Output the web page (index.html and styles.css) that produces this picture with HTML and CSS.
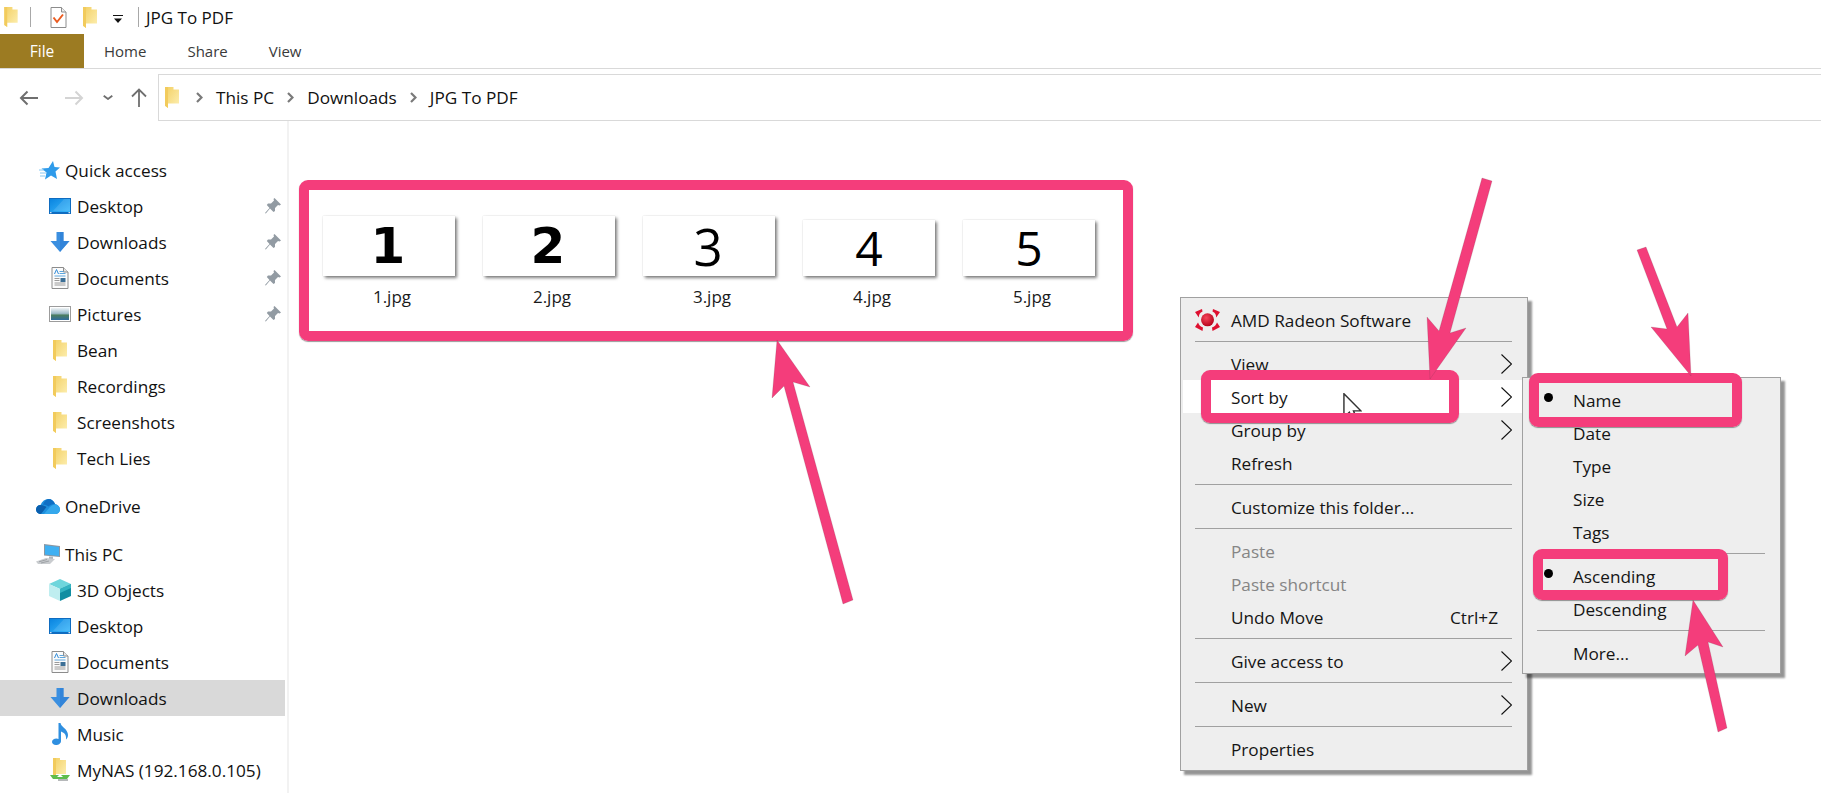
FILE: index.html
```html
<!DOCTYPE html>
<html lang="en">
<head>
<meta charset="utf-8">
<title>JPG To PDF</title>
<link rel="stylesheet" href="styles.css">
</head>
<body>
<svg class="sprite" width="0" height="0" aria-hidden="true">
  <defs>
    <linearGradient id="fold" x1="0" y1="0" x2="1" y2="1"><stop offset="0" stop-color="#f3cf62"/><stop offset="1" stop-color="#fdf0b4"/></linearGradient>
    <linearGradient id="blue" x1="0" y1="0" x2="1" y2="1"><stop offset="0" stop-color="#0a84e0"/><stop offset="1" stop-color="#39b7fb"/></linearGradient>
    <linearGradient id="pic" x1="0" y1="0" x2="0" y2="1"><stop offset="0" stop-color="#f0f4f6"/><stop offset=".45" stop-color="#9fbcc9"/><stop offset=".6" stop-color="#4b7d5e"/><stop offset="1" stop-color="#2f6c9e"/></linearGradient>
    <radialGradient id="ball" cx=".4" cy=".35" r=".7"><stop offset="0" stop-color="#f6455b"/><stop offset="1" stop-color="#b30018"/></radialGradient>
    <symbol id="i-folder" viewBox="0 0 14 21"><path d="M0 0H8.500V2.500H14V16.500H3V21L0 18.800Z" fill="url(#fold)"/><path d="M0 0H3V21L0 18.800Z" fill="#f2cb5c"/></symbol>
    <symbol id="i-desktop" viewBox="0 0 22 16"><rect width="22" height="16" fill="#0f6cc0"/><rect x="1" y="1" width="20" height="13" fill="url(#blue)"/><path d="M4 13L15 1H21V13Z" fill="#fff" opacity=".12"/><rect x="1" y="14.200" width="1.500" height="1" fill="#fff"/><rect x="19.500" y="14.200" width="1.500" height="1" fill="#fff"/></symbol>
    <symbol id="i-down" viewBox="0 0 19 20"><path d="M6 0H13V9H19L9.500 20L0 9H6Z" fill="#3b8fe0"/><path d="M9.500 0H13V9H19L9.500 20Z" fill="#2f7fd6" opacity=".7"/></symbol>
    <symbol id="i-doc" viewBox="0 0 17 22"><path d="M.5.500H12L16.500 5V21.500H.5Z" fill="#fbfbfb" stroke="#8c8c8c"/><path d="M12 .5V5H16.500" fill="#e6e6e6" stroke="#8c8c8c"/><path d="M3 7L5 2.500L7 7" fill="none" stroke="#2e8ad8"/><path d="M8 4.500H12M8 6.500H14M3 9H14" stroke="#5ea6dd"/><path d="M3 11.500H8M3 13.500H8M3 16H14M3 18H14" stroke="#9a9a9a"/><rect x="9" y="11" width="5" height="4" fill="#3c6f96"/></symbol>
    <symbol id="i-pic" viewBox="0 0 22 16"><rect x=".5" y=".5" width="21" height="15" fill="#fff" stroke="#9c9c9c"/><rect x="2" y="2" width="18" height="12" fill="url(#pic)"/></symbol>
    <symbol id="i-star" viewBox="0 0 24 19"><polygon points="17,0 18.500,6 24,6.500 19.500,10.500 21,18 15,14.500 9,18.500 10.500,11.500 5.500,7.500 12.500,7" fill="#2f9bea"/><path d="M3 9H8M4 12H10M4 15H9" stroke="#86c8f3"/></symbol>
    <symbol id="i-cloud" viewBox="0 0 24 16"><path d="M5 16C1.500 16 0 13.500 0 11.500C0 9 2 7 4.500 7C6 3 9 1 12.500 1C15.500 1 18 3 19 6C22 6.500 24 9 24 11.500C24 14 22 16 19 16Z" fill="#1d8fdd"/><path d="M5 16C2 16 0 14 0 11.500C0 9 2 7 4.500 7C7 7 9 8 10.500 9L5 16Z" fill="#0a5fae"/><path d="M12.500 1C15.500 1 18 3 19 6C16 6 14 7 12.500 8.500C10.500 7 8.500 6.500 7 6.800C8 3.500 10 1 12.500 1Z" fill="#0f6fc4"/><path d="M8 16L14 9C16 7 19 6 21 7C23 8 24 10 24 11.500C24 14 22 16 19 16Z" fill="#35a8ec"/></symbol>
    <symbol id="i-pc" viewBox="0 0 24 20"><path d="M8 0L24 2V13L8 11.500Z" fill="#8a97a3"/><path d="M9 1.300L23 3V12L9 10.500Z" fill="#3fb0f2"/><path d="M13 12.500H17V15H13Z" fill="#aeb6bc"/><path d="M0 17.500L10 14L19 15L14 20H2Z" fill="#c9cccf"/><path d="M3 17.800L11 15.500M5 19L13 17" stroke="#9ea2a6"/></symbol>
    <symbol id="i-cube" viewBox="0 0 22 22"><path d="M11 0L22 5L11 10L0 5Z" fill="#6fd6dc"/><path d="M0 5L11 10V22L0 17Z" fill="#bfeef0"/><path d="M22 5L11 10V22L22 17Z" fill="#118ea2"/><path d="M11 14L22 9V5L11 10Z" fill="#35b4c2"/></symbol>
    <symbol id="i-music" viewBox="0 0 17 22"><path d="M7 0H9C9.500 4 16.500 6 16.500 12C16.500 14 15.500 15.500 14.500 16.500C15 11 12 9.500 9.500 8.500V18C9.500 20.500 7 22 4.500 22C2 22 .5 20.500 .5 19C.5 17 2.500 15.500 5 15.500C5.500 15.500 6.500 15.700 7 16Z" fill="#2f8fe0"/></symbol>
    <symbol id="i-nas" viewBox="0 0 20 24"><path d="M3 0H10V2H16V16H6V19L3 17Z" fill="url(#fold)"/><path d="M3 0H6V19L3 17Z" fill="#f2cb5c"/><path d="M0 17H20L17 21H3Z" fill="#5fbd4d"/><path d="M7 19H13L10 16Z" fill="#fff"/><rect x="8" y="21" width="10" height="2" fill="#b6b8ba"/></symbol>
    <symbol id="i-pin" viewBox="0 0 16 16"><path d="M9.500 0L16 6.500L14.500 7.500L13 7L10 10L10 13L8.500 14L5 10.500L.8 15.500L0 15L4.500 10L1.800 7L3 5.500H6L9 2.500L8.500 1Z" fill="#929ba3"/></symbol>
    <symbol id="i-amd" viewBox="0 0 25 22"><path d="M0 3L7 0L7.500 2.500C5 3.500 3.800 5.500 3.800 8.500ZM25 3L18 0L17.500 2.500C20 3.500 21.200 5.500 21.200 8.500ZM0 18L3 13.500C4 16 5.500 18 8 18.500L7.500 22ZM25 18L22 13.500C21 16 19.500 18 17 18.500L17.500 22Z" fill="#de1030"/><circle cx="12.500" cy="10.800" r="6.500" fill="url(#ball)"/></symbol>
    <symbol id="i-chev" viewBox="0 0 11 20"><path d="M.5.500L10.500 10L.5 19.500" fill="none" stroke="#111" stroke-width="1.100"/></symbol>
    <symbol id="i-crumb" viewBox="0 0 7 11"><path d="M1 1L5.500 5.500L1 10" fill="none" stroke="#7a7a7a" stroke-width="2.200"/></symbol>
  </defs>
</svg>

<header class="titlebar">
  <svg class="qa-folder"><use href="#i-folder"/></svg>
  <span class="qa-sep"></span>
  <svg class="qa-doc" viewBox="0 0 16 21"><path d="M.5.500H11L15.500 5V20.500H.5Z" fill="#fff" stroke="#8c8c8c"/><path d="M11 .5V5H15.500" fill="#eee" stroke="#8c8c8c"/><path d="M3 10.500L6.500 15L12.500 7.500" fill="none" stroke="#ea5b20" stroke-width="2"/></svg>
  <svg class="qa-folder2"><use href="#i-folder"/></svg>
  <svg class="qa-drop" viewBox="0 0 10 8"><path d="M0 .5H10" stroke="#111"/><path d="M1 3.500H9L5 8Z" fill="#111"/></svg>
  <span class="qa-sep qa-sep2"></span>
  <span class="title-text">JPG To PDF</span>
</header>

<nav class="tabs">
  <span class="tab-file">File</span>
  <span class="tab">Home</span>
  <span class="tab">Share</span>
  <span class="tab">View</span>
</nav>

<div class="navbar">
  <svg class="nav-back" viewBox="0 0 19 16"><path d="M19 8H2M8.500 1.500L2 8L8.500 14.500" fill="none" stroke="#6f6f6f" stroke-width="2"/></svg>
  <svg class="nav-fwd" viewBox="0 0 19 16"><path d="M0 8H17M10.500 1.500L17 8L10.500 14.500" fill="none" stroke="#d4d4d4" stroke-width="2"/></svg>
  <svg class="nav-down" viewBox="0 0 10 5"><path d="M.7.700L5 4L9.300.700" fill="none" stroke="#6f6f6f" stroke-width="1.800"/></svg>
  <svg class="nav-up" viewBox="0 0 16 19"><path d="M8 19V2M1 8.500L8 1.500L15 8.500" fill="none" stroke="#6f6f6f" stroke-width="1.800"/></svg>
  <div class="address">
    <svg class="addr-folder"><use href="#i-folder"/></svg>
    <svg class="crumb crumb-first"><use href="#i-crumb"/></svg>
    <span>This PC</span>
    <svg class="crumb"><use href="#i-crumb"/></svg>
    <span>Downloads</span>
    <svg class="crumb"><use href="#i-crumb"/></svg>
    <span>JPG To PDF</span>
  </div>
</div>

<main class="main">
  <aside class="sidebar">
    <div class="group">
      <div class="row top"><svg class="ic-top ic-star"><use href="#i-star"/></svg><span>Quick access</span></div>
      <div class="row"><svg class="ic ic-desk"><use href="#i-desktop"/></svg><span>Desktop</span><svg class="pin"><use href="#i-pin"/></svg></div>
      <div class="row"><svg class="ic ic-down"><use href="#i-down"/></svg><span>Downloads</span><svg class="pin"><use href="#i-pin"/></svg></div>
      <div class="row"><svg class="ic ic-doc"><use href="#i-doc"/></svg><span>Documents</span><svg class="pin"><use href="#i-pin"/></svg></div>
      <div class="row"><svg class="ic ic-pic"><use href="#i-pic"/></svg><span>Pictures</span><svg class="pin"><use href="#i-pin"/></svg></div>
      <div class="row"><svg class="ic ic-fold"><use href="#i-folder"/></svg><span>Bean</span></div>
      <div class="row"><svg class="ic ic-fold"><use href="#i-folder"/></svg><span>Recordings</span></div>
      <div class="row"><svg class="ic ic-fold"><use href="#i-folder"/></svg><span>Screenshots</span></div>
      <div class="row"><svg class="ic ic-fold"><use href="#i-folder"/></svg><span>Tech Lies</span></div>
    </div>
    <div class="group">
      <div class="row top"><svg class="ic-top ic-cloud"><use href="#i-cloud"/></svg><span>OneDrive</span></div>
    </div>
    <div class="group">
      <div class="row top"><svg class="ic-top ic-pc"><use href="#i-pc"/></svg><span>This PC</span></div>
      <div class="row"><svg class="ic ic-cube"><use href="#i-cube"/></svg><span>3D Objects</span></div>
      <div class="row"><svg class="ic ic-desk"><use href="#i-desktop"/></svg><span>Desktop</span></div>
      <div class="row"><svg class="ic ic-doc"><use href="#i-doc"/></svg><span>Documents</span></div>
      <div class="row selected"><svg class="ic ic-down"><use href="#i-down"/></svg><span>Downloads</span></div>
      <div class="row"><svg class="ic ic-music"><use href="#i-music"/></svg><span>Music</span></div>
      <div class="row"><svg class="ic ic-nas"><use href="#i-nas"/></svg><span>MyNAS (192.168.0.105)</span></div>
    </div>
  </aside>

  <section class="files">
    <figure class="file"><div class="thumb"><span class="digit bold">1</span></div><figcaption>1.jpg</figcaption></figure>
    <figure class="file"><div class="thumb"><span class="digit bold">2</span></div><figcaption>2.jpg</figcaption></figure>
    <figure class="file"><div class="thumb"><span class="digit big">3</span></div><figcaption>3.jpg</figcaption></figure>
    <figure class="file"><div class="thumb short"><span class="digit">4</span></div><figcaption>4.jpg</figcaption></figure>
    <figure class="file"><div class="thumb short"><span class="digit">5</span></div><figcaption>5.jpg</figcaption></figure>
  </section>
</main>

<div class="menu menu-main">
  <div class="item item-amd"><svg class="amd"><use href="#i-amd"/></svg><span>AMD Radeon Software</span></div>
  <div class="sep"></div>
  <div class="item"><span>View</span><svg class="chev"><use href="#i-chev"/></svg></div>
  <div class="item hover"><span>Sort by</span><svg class="chev"><use href="#i-chev"/></svg></div>
  <div class="item"><span>Group by</span><svg class="chev"><use href="#i-chev"/></svg></div>
  <div class="item"><span>Refresh</span></div>
  <div class="sep"></div>
  <div class="item"><span>Customize this folder...</span></div>
  <div class="sep"></div>
  <div class="item disabled"><span>Paste</span></div>
  <div class="item disabled"><span>Paste shortcut</span></div>
  <div class="item"><span>Undo Move</span><span class="shortcut">Ctrl+Z</span></div>
  <div class="sep"></div>
  <div class="item"><span>Give access to</span><svg class="chev"><use href="#i-chev"/></svg></div>
  <div class="sep"></div>
  <div class="item"><span>New</span><svg class="chev"><use href="#i-chev"/></svg></div>
  <div class="sep"></div>
  <div class="item"><span>Properties</span></div>
</div>

<div class="menu menu-sub">
  <div class="item dotted"><i class="dot"></i><span>Name</span></div>
  <div class="item"><span>Date</span></div>
  <div class="item"><span>Type</span></div>
  <div class="item"><span>Size</span></div>
  <div class="item"><span>Tags</span></div>
  <div class="sep"></div>
  <div class="item dotted"><i class="dot"></i><span>Ascending</span></div>
  <div class="item"><span>Descending</span></div>
  <div class="sep"></div>
  <div class="item"><span>More...</span></div>
</div>

<svg class="cursor" viewBox="0 0 13 21"><path d="M.5.500V17L4.300 13.500L7 20L9.800 18.800L7.200 12.500H12.300Z" fill="#fff" stroke="#333"/></svg>

<div class="callout callout-files"></div>
<div class="callout callout-sort"></div>
<div class="callout callout-name"></div>
<div class="callout callout-asc"></div>

<svg class="arrows" viewBox="0 0 1821 793">
  <polygon points="777,340 810,387 793,382 853,600 843,604 784,386 772,398"/>
  <polygon points="1482,178 1492,181 1450,333 1466,328 1430,379 1427,317 1439,331"/>
  <polygon points="1637,250 1646,247 1677,327 1688,313 1691,376 1651,327 1667,329"/>
  <polygon points="1693,600 1723,647 1708,642 1727,728 1718,732 1698,645 1685,656"/>
</svg>
</body>
</html>
```

FILE: styles.css
```css
* { box-sizing: border-box; }
html, body { margin: 0; height: 793px; overflow: hidden; background: #fff; }
body {
  position: relative;
  display: flex;
  flex-direction: column;
  font-family: "Open Sans", "Noto Sans", sans-serif;
  font-size: 17.200px;
  color: #111;
}
svg { display: block; flex: none; }
.sprite { position: absolute; }

/* title bar */
.titlebar { height: 34px; display: flex; align-items: center; }
.qa-folder { width: 14px; height: 20px; margin-left: 4px; }
.qa-sep { width: 1px; height: 20px; background: #a8a8a8; margin-left: 12px; }
.qa-doc { width: 17px; height: 21px; margin-left: 19px; }
.qa-folder2 { width: 14px; height: 21px; margin-left: 16px; }
.qa-drop { width: 10px; height: 8px; margin-left: 16px; margin-top: 4px; }
.qa-sep2 { margin-left: 15px; }
.title-text { margin-left: 7px; font-size: 17px; }

/* ribbon tabs */
.tabs { height: 35px; display: flex; border-bottom: 1px solid #d9d9d9; gap: 41px; align-items: stretch; }
.tab-file { width: 84px; background: #9c7b22; color: #fff; display: flex; align-items: center; justify-content: center; margin-right: -21px; font-size: 15.500px; }
.tab { display: flex; align-items: center; color: #3a3a3a; font-size: 15px; }

/* navigation */
.navbar { height: 52px; padding-top: 5px; display: flex; align-items: center; }
.nav-back { width: 19px; height: 16px; margin-left: 19px; }
.nav-fwd { width: 19px; height: 16px; margin-left: 27px; }
.nav-down { width: 10px; height: 5px; margin-left: 19px; }
.nav-up { width: 16px; height: 19px; margin-left: 18px; }
.address { flex: 1; height: 47px; margin-left: 11px; border: 1px solid #d9d9d9; border-right: 0; display: flex; align-items: center; }
.addr-folder { width: 14px; height: 21px; margin-left: 6px; }
.crumb { width: 7px; height: 11px; margin: 0 13px 0 13px; }
.crumb-first { margin-left: 17px; }

/* main */
.main { flex: 1; display: flex; min-height: 0; }
.sidebar { width: 289px; padding: 31px 2px 0 0; border-right: 2px solid #f2f2f2; }
.group { margin-bottom: 12px; }
.row { height: 36px; display: flex; align-items: center; padding-left: 49px; }
.row.top { padding-left: 36px; }
.row.selected { background: #d9d9d9; }
.ic-top { width: 24px; margin-right: 5px; }
.ic-star { height: 19px; }
.ic-cloud { height: 16px; }
.ic-pc { height: 20px; }
.ic { width: 22px; margin-right: 6px; }
.ic-desk { height: 16px; }
.ic-down { height: 20px; }
.ic-doc { height: 22px; }
.ic-pic { height: 16px; }
.ic-fold { height: 21px; }
.ic-cube { height: 22px; }
.ic-music { height: 22px; }
.ic-nas { height: 24px; }
.pin { width: 16px; height: 16px; margin-left: auto; margin-right: 4px; }

/* file area */
.files { flex: 1; padding: 95px 0 0 34px; display: flex; gap: 28px; align-items: flex-start; }
.file { width: 132px; margin: 0; }
.thumb { height: 60px; background: #fff; box-shadow: 0 0 1px rgba(0, 0, 0, .2), 2px 2px 3px rgba(0, 0, 0, .5); display: flex; align-items: center; justify-content: center; }
.thumb.short { height: 56px; margin-top: 4px; }
.digit { font-family: "Open Sans", sans-serif; font-size: 48px; line-height: 1; color: #000; }
.digit.big { font-size: 51px; margin-left: -2px; }
.digit.bold { font-family: "DejaVu Sans", sans-serif; font-weight: 700; font-size: 50px; margin-left: -2px; }
figcaption { margin-top: 10px; padding-left: 6px; text-align: center; line-height: 22px; font-size: 17px; color: #1a1a1a; }

/* context menus */
.menu { position: absolute; background: #eeeeee; border: 1px solid #a0a0a0; padding: 5px 2px; box-shadow: 4px 4px 2px rgba(0, 0, 0, .42); }
.menu-main { left: 1180px; top: 297px; width: 348px; height: 474px; }
.menu-sub { left: 1522px; top: 377px; width: 259px; height: 297px; }
.item { height: 33px; display: flex; align-items: center; padding-left: 48px; padding-right: 13px; color: #151515; }
.item > span { padding-top: 2px; }
.item-amd { padding-left: 12px; }
.amd { width: 25px; height: 22px; margin-right: 11px; }
.chev { width: 11px; height: 20px; margin-left: auto; }
.shortcut { margin-left: auto; margin-right: 14px; }
.hover { background: #fff; }
.disabled { color: #858585; }
.sep { height: 1px; background: #a0a0a0; margin: 5px 13px 5px 12px; }
.dotted { padding-left: 19px; }
.dot { width: 9px; height: 9px; border-radius: 50%; background: #000; margin-right: 20px; margin-top: -4px; }

/* annotations */
.cursor { position: absolute; left: 1343px; top: 393px; width: 19px; height: 30px; }
.callout { position: absolute; border: 10px solid #f43d7b; border-radius: 9px; box-shadow: 0 1px 1px rgba(0, 0, 0, .4); }
.callout-files { left: 299px; top: 180px; width: 834px; height: 161px; }
.callout-sort { left: 1201px; top: 370px; width: 258px; height: 53px; }
.callout-name { left: 1529px; top: 373px; width: 213px; height: 54px; }
.callout-asc { left: 1533px; top: 549px; width: 195px; height: 51px; }
.arrows { position: absolute; left: 0; top: 0; width: 1821px; height: 793px; }
.arrows polygon { fill: #f43d7b; stroke: rgba(90, 60, 70, .35); stroke-width: .5; }
```
